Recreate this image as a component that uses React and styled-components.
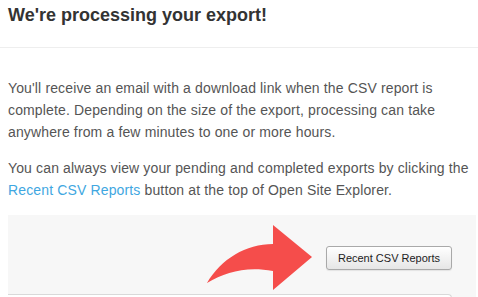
import styled, { createGlobalStyle } from 'styled-components';

const GlobalStyle = createGlobalStyle`
  html, body {
    margin: 0;
    padding: 0;
    height: 297px;
    overflow: hidden;
    background: #fff;
    font-family: "Liberation Sans", Arial, sans-serif;
  }
`;

const Page = styled.div`
  width: 478px;
`;

const Header = styled.div`
  padding: 3px 8px 20px;
  border-bottom: 1px solid #eeeeee;
`;

const Title = styled.h2`
  margin: 0;
  font-size: 18px;
  line-height: 24px;
  font-weight: bold;
  color: #333333;
`;

const Body = styled.div`
  padding: 29px 2px 0 8px;
`;

const Text = styled.p`
  margin: 0 0 14px;
  font-size: 14px;
  line-height: 22px;
  letter-spacing: 0.14px;
  color: #555555;
`;

const Link = styled.a`
  color: #3fa7e1;
  text-decoration: none;
  cursor: pointer;
`;

const Panel = styled.div`
  background: #f7f7f7;
  padding-top: 9px;
  height: 73px;
  overflow: hidden;
`;

const ButtonRow = styled.div`
  display: flex;
  justify-content: flex-end;
  align-items: center;
  gap: 14px;
  padding-right: 24px;
  height: 67px;
`;

const Arrow = styled.svg`
  display: block;
  width: 106px;
  height: 67px;
`;

const ReportButton = styled.button`
  width: 126px;
  height: 24px;
  padding: 0;
  border: 1px solid #a9a9a9;
  border-radius: 3px;
  background: linear-gradient(#ffffff, #e6e6e6);
  box-shadow: 0 1px 1px rgba(0, 0, 0, 0.08);
  font-family: "Liberation Sans", Arial, sans-serif;
  font-size: 11px;
  color: #222222;
  cursor: pointer;
`;

const Inner = styled.div`
  margin-top: 3px;
  margin-right: 24px;
  height: 20px;
  background: #ffffff;
  border-top: 1px solid #d9d9d9;
  border-right: 1px solid #d9d9d9;
  border-top-right-radius: 4px;
`;

export default function App() {
  return (
    <Page>
      <GlobalStyle />
      <Header>
        <Title>We're processing your export!</Title>
      </Header>
      <Body>
        <Text>
          You'll receive an email with a download link when the CSV report is complete. Depending
          on the size of the export, processing can take anywhere from a few minutes to one or
          more hours.
        </Text>
        <Text>
          You can always view your pending and completed exports by clicking the{' '}
          <Link>Recent CSV Reports</Link> button at the top of Open Site Explorer.
        </Text>
        <Panel>
          <ButtonRow>
            <Arrow viewBox="0 0 106 67">
              <path
                d="M1 59 C 15 35, 40 20, 67 20 L67 1 L106 33 L67 66 L67 47 C 40 42, 20 48, 1 59 Z"
                fill="#f54d4b"
              />
            </Arrow>
            <ReportButton>Recent CSV Reports</ReportButton>
          </ButtonRow>
          <Inner />
        </Panel>
      </Body>
    </Page>
  );
}
